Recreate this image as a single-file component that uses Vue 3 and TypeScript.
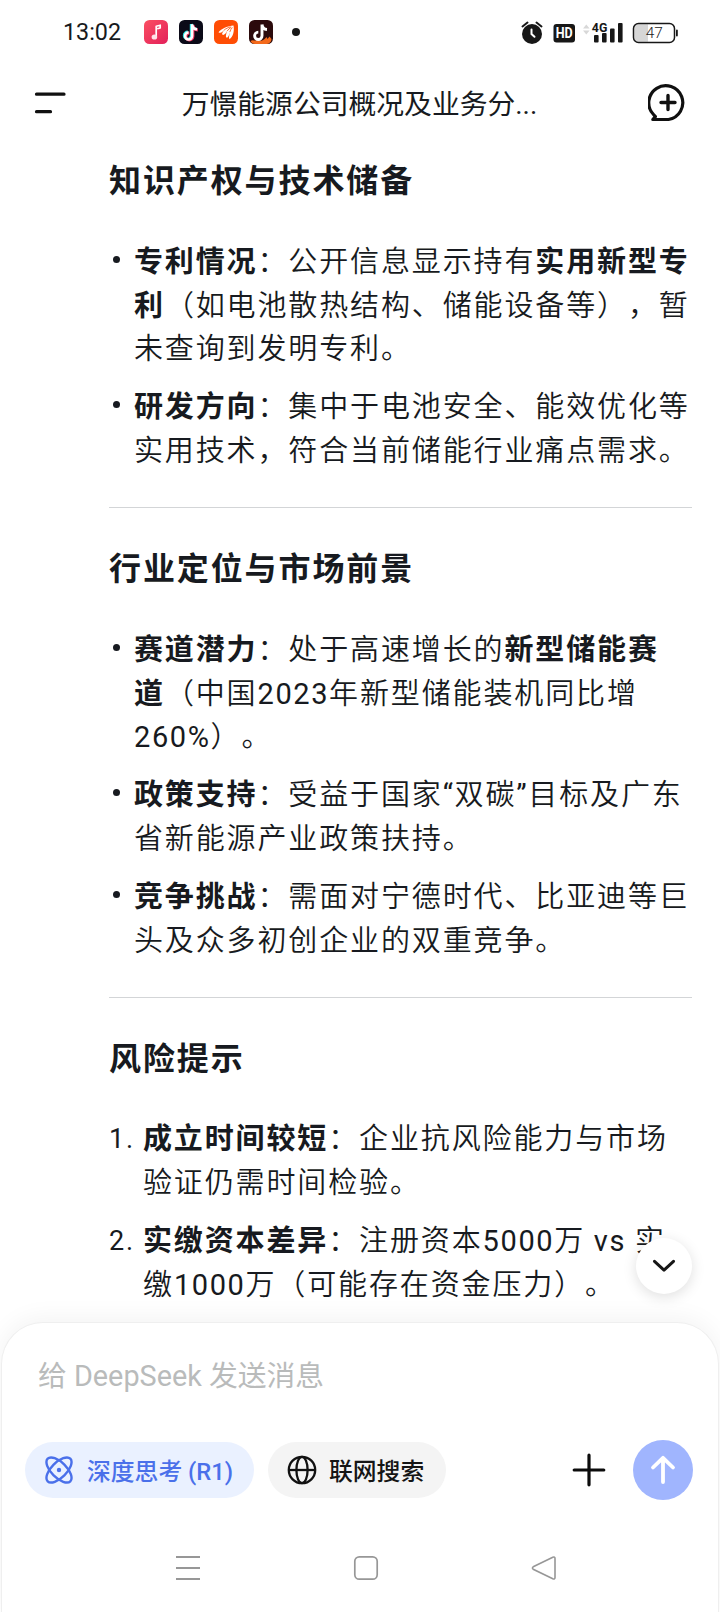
<script setup lang="ts">
interface Run {
  text: string
  bold?: boolean
  latin?: boolean
}
interface Item {
  marker: string
  lines: Run[][]
}
interface Section {
  title: string
  ordered?: boolean
  items: Item[]
}

const b = (text: string): Run => ({ text, bold: true })
const t = (text: string): Run => ({ text })
const n = (text: string): Run => ({ text, latin: true })

const sections: Section[] = [
  {
    title: '知识产权与技术储备',
    items: [
      {
        marker: '•',
        lines: [
          [b('专利情况'), t('：公开信息显示持有'), b('实用新型专')],
          [b('利'), t('（如电池散热结构、储能设备等），暂')],
          [t('未查询到发明专利。')],
        ],
      },
      {
        marker: '•',
        lines: [
          [b('研发方向'), t('：集中于电池安全、能效优化等')],
          [t('实用技术，符合当前储能行业痛点需求。')],
        ],
      },
    ],
  },
  {
    title: '行业定位与市场前景',
    items: [
      {
        marker: '•',
        lines: [
          [b('赛道潜力'), t('：处于高速增长的'), b('新型储能赛')],
          [b('道'), t('（中国'), n('2023'), t('年新型储能装机同比增')],
          [n('260%'), t('）。')],
        ],
      },
      {
        marker: '•',
        lines: [
          [b('政策支持'), t('：受益于国家'), n('“'), t('双碳'), n('”'), t('目标及广东')],
          [t('省新能源产业政策扶持。')],
        ],
      },
      {
        marker: '•',
        lines: [
          [b('竞争挑战'), t('：需面对宁德时代、比亚迪等巨')],
          [t('头及众多初创企业的双重竞争。')],
        ],
      },
    ],
  },
  {
    title: '风险提示',
    ordered: true,
    items: [
      {
        marker: '1.',
        lines: [
          [b('成立时间较短'), t('：企业抗风险能力与市场')],
          [t('验证仍需时间检验。')],
        ],
      },
      {
        marker: '2.',
        lines: [
          [b('实缴资本差异'), t('：注册资本'), n('5000'), t('万'), n(' vs '), t('实')],
          [t('缴'), n('1000'), t('万（可能存在资金压力）。')],
        ],
      },
    ],
  },
]
</script>

<template>
  <div class="screen">
    <div class="status">
      <span class="clock">13:02</span>
      <div class="apps">
        <svg class="app" viewBox="0 0 24 24">
          <defs>
            <linearGradient id="pink" x1="0" y1="0" x2="1" y2="1">
              <stop offset="0" stop-color="#fb4f62" />
              <stop offset="1" stop-color="#e3205a" />
            </linearGradient>
          </defs>
          <rect width="24" height="24" rx="5.5" fill="url(#pink)" />
          <path d="M12.2 16.8V6.200l4-1v2.800l-3 .8" fill="none" stroke="#fff" stroke-width="1.700" stroke-linejoin="round" />
          <ellipse cx="10.400" cy="17" rx="2.800" ry="2.600" fill="#ffe3e8" />
        </svg>
        <svg class="app" viewBox="0 0 24 24">
          <rect width="24" height="24" rx="5.500" fill="#0b0a18" />
          <g fill="none" stroke-width="3">
            <path d="M12.300 4v11.500a3.500 3.500 0 1 1-3.500-3.500M12.300 4c.3 3 2 4.800 5 5" stroke="#2be5e4" />
            <path d="M13.900 5v11.500a3.500 3.500 0 1 1-3.500-3.500M13.900 5c.3 3 2 4.800 5 5" stroke="#f5305b" />
            <path d="M13.100 4.300v11.700a3.500 3.500 0 1 1-3.500-3.500M13.100 4.300c.3 3 2 4.800 5 5" stroke="#fff" stroke-width="2.600" />
          </g>
        </svg>
        <svg class="app" viewBox="0 0 24 24">
          <rect width="24" height="24" rx="5.500" fill="#ff4d05" />
          <path d="M19.500 5.500C14 6.200 8 8 4.500 12.200c2 1.600 4-.2 5.200-1.700-1 2-2.300 3.400-1.200 4.300 1.700.6 3.500-1.600 4.500-3.600-.8 2.700-1.700 5-.6 6.400 1.800.4 2.900-2.700 3.400-5.600 0 2.800-1.600 5.500-.4 7.200 3.600-2.200 5.200-8 4.100-13.700z" fill="#fff" />
          <path d="M9.700 10.500c2-2 4.500-3 7-3.600M13 11.200c1.200-1.700 2.600-3 4.400-4M15.800 12c.5-1.800 1.400-3.300 2.600-4.500" fill="none" stroke="#ff4d05" stroke-width=".8" />
        </svg>
        <svg class="app" viewBox="0 0 24 24">
          <rect width="24" height="24" rx="5.500" fill="#2b0a0c" />
          <path d="M1.500 21c2-1.500 4 0 6-.5s4 .5 5.500 0 3-1.500 4.500-3.500l1 2 2-2.500 2 2.500A5.500 5.500 0 0 1 18 24H6A5 5 0 0 1 1.500 21z" fill="#f46a1c" />
          <path d="M13 4.500v11.300a3.700 3.700 0 1 1-3.700-3.700M13 4.500c.3 3 2 4.800 5 5" fill="none" stroke="#fff" stroke-width="2.900" />
        </svg>
      </div>
      <i class="more-dot"></i>
      <svg class="sys" width="170" height="30" viewBox="0 0 170 30">
        <circle cx="12" cy="18" r="10" fill="#171717" />
        <path d="M2.500 10.500 7.500 6.500M21.500 10.500 16.500 6.500" stroke="#171717" stroke-width="2" stroke-linecap="round" />
        <path d="M11.500 13.500v4.500l3 2.800" fill="none" stroke="#fff" stroke-width="2" stroke-linecap="round" />
        <rect x="33.500" y="8" width="21.500" height="18.500" rx="3" fill="#171717" />
        <text x="44.200" y="22.300" text-anchor="middle" font-size="14" font-weight="700" fill="#fff" textLength="17" lengthAdjust="spacingAndGlyphs">HD</text>
        <path d="M63 12.500 66.300 8.500 69.600 12.500zM63 14.500h6.600L66.300 18.500z" fill="#d8d8d8" />
        <g fill="#171717">
          <rect x="74" y="19" width="4.600" height="7.500" rx="1" />
          <rect x="82" y="17" width="4.600" height="9.500" rx="1" />
          <rect x="90" y="12.500" width="4.600" height="14" rx="1" />
          <rect x="98" y="7" width="4.600" height="19.500" rx="1" />
        </g>
        <text x="71.800" y="16" font-size="13.500" font-weight="700" fill="#171717" textLength="15.500" lengthAdjust="spacingAndGlyphs">4G</text>
        <path d="M118 8.200h10v17.600h-10a3.500 3.500 0 0 1-3.500-3.500V11.700a3.500 3.500 0 0 1 3.500-3.500z" fill="#d6d6d6" />
        <rect x="113.500" y="7.500" width="41" height="19" rx="5" fill="none" stroke="#171717" stroke-width="1.500" />
        <rect x="156" y="13.500" width="1.800" height="7" rx=".9" fill="#171717" />
        <text x="134.300" y="22.300" text-anchor="middle" font-size="15.500" font-weight="300" fill="#222">47</text>
      </svg>
    </div>

    <header class="bar">
      <svg class="menu" width="34" height="26" viewBox="0 0 34 26">
        <path d="M2.500 4.200H30M2.500 21.700H16.500" stroke="#101010" stroke-width="3.200" stroke-linecap="round" />
      </svg>
      <h1 class="title">万憬能源公司概况及业务分...</h1>
      <svg class="new-chat" width="40" height="40" viewBox="0 0 40 40">
        <path d="M5.500 31.500A17 17 0 1 1 20.500 36.500H4.800l2.600-2.900z" fill="none" stroke="#101010" stroke-width="3.200" stroke-linejoin="round" />
        <path d="M20 12.500v14M13 19.500h14" stroke="#101010" stroke-width="3.400" stroke-linecap="round" />
      </svg>
    </header>

    <main class="answer">
      <section v-for="s in sections" :key="s.title" class="section">
        <h2 class="heading">{{ s.title }}</h2>
        <ul class="list">
          <li v-for="(item, i) in s.items" :key="i" class="item">
            <i v-if="!s.ordered" class="bullet"></i>
            <span v-else class="number">{{ item.marker }}</span>
            <div class="text">
              <div v-for="(line, j) in item.lines" :key="j" class="line"><span v-for="(r, k) in line" :key="k" :class="{ strong: r.bold, latin: r.latin }">{{ r.text }}</span></div>
            </div>
          </li>
        </ul>
      </section>
      <button class="to-bottom" aria-label="down">
        <svg width="26" height="18" viewBox="0 0 26 18">
          <path d="M3.500 4.300 13 13.200 22.500 4.300" fill="none" stroke="#171717" stroke-width="3" stroke-linecap="round" stroke-linejoin="round" />
        </svg>
      </button>
    </main>

    <footer class="composer">
      <div class="placeholder">给 DeepSeek 发送消息</div>
      <div class="tools">
        <button class="chip active">
          <svg width="28" height="28" viewBox="0 0 28 28" fill="none" stroke="#4a70ea" stroke-width="2.400">
            <ellipse cx="14" cy="14" rx="16" ry="7.600" transform="rotate(45 14 14)" />
            <ellipse cx="14" cy="14" rx="16" ry="7.600" transform="rotate(-45 14 14)" />
            <circle cx="14" cy="14" r="2.200" fill="#4a70ea" stroke="none" />
          </svg>
          <span class="label">深度思考 (R1)</span>
        </button>
        <button class="chip search">
          <svg width="30" height="30" viewBox="0 0 30 30" fill="none" stroke="#111" stroke-width="2.300">
            <circle cx="15" cy="15" r="13.200" />
            <ellipse cx="15" cy="15" rx="5.600" ry="13.200" />
            <path d="M2 15h26" />
          </svg>
          <span class="label">联网搜索</span>
        </button>
        <svg class="plus" width="34" height="34" viewBox="0 0 34 34">
          <path d="M17 2.200v29.600M2.200 17h29.600" stroke="#0c0c0c" stroke-width="3.200" stroke-linecap="round" />
        </svg>
        <button class="send" aria-label="send">
          <svg width="30" height="32" viewBox="0 0 30 32">
            <path d="M15 28V4M5 13.500 15 3.800 25 13.500" fill="none" stroke="#fff" stroke-width="3.800" stroke-linecap="round" stroke-linejoin="round" />
          </svg>
        </button>
      </div>
      <nav class="nav">
        <svg width="26" height="26" viewBox="0 0 26 26">
          <path d="M1 2h24M1 13h24M1 24h24" stroke="#979797" stroke-width="1.800" />
        </svg>
        <svg width="26" height="26" viewBox="0 0 26 26">
          <rect x="1.800" y="1.800" width="22.400" height="22.400" rx="4.500" fill="none" stroke="#979797" stroke-width="1.700" />
        </svg>
        <svg width="26" height="26" viewBox="0 0 26 26">
          <path d="M2.200 11.800 21.800 2.200Q24 1.300 24 3.500V22.500Q24 24.700 21.800 23.800L2.200 14.200Q.7 13 2.200 11.800z" fill="none" stroke="#979797" stroke-width="1.600" />
        </svg>
      </nav>
    </footer>
  </div>
</template>

<style>
body {
  margin: 0;
  background: #fff;
}
</style>

<style scoped>
.screen {
  width: 720px;
  height: 1612px;
  display: flex;
  flex-direction: column;
  overflow: hidden;
  background: #fff;
  color: #171a20;
  font-family: Roboto, 'Noto Sans CJK SC', sans-serif;
  text-spacing-trim: space-all;
  white-space: nowrap;
}
button {
  border: 0;
  padding: 0;
  font: inherit;
}
.status {
  height: 64px;
  flex: none;
  display: flex;
  align-items: center;
  padding: 0 30px 0 63px;
  box-sizing: border-box;
}
.clock {
  width: 81px;
  font-size: 23.300px;
  line-height: 30px;
}
.apps {
  display: flex;
  gap: 11px;
}
.app {
  width: 24px;
  height: 24px;
}
.more-dot {
  width: 8px;
  height: 8px;
  margin-left: 19px;
  border-radius: 50%;
  background: #171717;
}
.sys {
  margin-left: auto;
  margin-bottom: 2px;
}
.bar {
  height: 78px;
  flex: none;
  display: flex;
  align-items: center;
  padding: 0 32px 0 34px;
}
.menu {
  flex: none;
}
.title {
  flex: 1;
  margin: 0;
  padding-top: 3px;
  padding-left: 3px;
  text-align: center;
  font-size: 27.800px;
  font-weight: 400;
  line-height: 40px;
}
.new-chat {
  flex: none;
}
.answer {
  position: relative;
  flex: 1;
  min-height: 0;
  padding: 8px 28px 0 109px;
}
.section {
  padding-bottom: 32.800px;
}
.section + .section {
  border-top: 1px solid #d3d5d7;
  padding-top: 30px;
}
.heading {
  height: 62px;
  margin: 0 0 28.800px;
  line-height: 62px;
  font-size: 32px;
  font-weight: 700;
  letter-spacing: 1.900px;
}
.list {
  margin: 0;
  padding: 0;
  list-style: none;
  display: flex;
  flex-direction: column;
  gap: 14.100px;
}
.item {
  display: flex;
}
.bullet {
  flex: none;
  width: 7px;
  height: 7px;
  margin: 15px 14px 0 4px;
  border-radius: 50%;
  background: #171a20;
}
.number {
  flex: none;
  width: 34px;
  font-size: 27px;
  line-height: 43.900px;
  letter-spacing: 1.800px;
}
.line {
  height: 43.850px;
  line-height: 43.850px;
  font-size: 29px;
  font-weight: 350;
  letter-spacing: 1.870px;
}
.latin {
  font-weight: 400;
  letter-spacing: 1.600px;
  white-space: pre;
}
.strong {
  font-weight: 700;
}
.to-bottom {
  position: absolute;
  right: 28px;
  bottom: 28px;
  width: 56px;
  height: 56px;
  display: flex;
  align-items: center;
  justify-content: center;
  border-radius: 50%;
  background: #fff;
  box-shadow: 0 3px 14px rgba(0, 0, 0, 0.13);
}
.composer {
  position: relative;
  flex: none;
  height: 290px;
  margin: 0 1px;
  box-sizing: border-box;
  border: 1.500px solid #efefef;
  border-bottom: 0;
  border-radius: 42px 42px 0 0;
  background: #fff;
  box-shadow: 0 -4px 24px rgba(0, 0, 0, 0.05);
}
.placeholder {
  padding: 31px 0 0 36px;
  line-height: 44px;
  font-size: 28.800px;
  color: #b9bbbb;
}
.tools {
  display: flex;
  align-items: center;
  height: 60px;
  margin-top: 42px;
  padding: 0 25px 0 23px;
}
.chip {
  display: flex;
  align-items: center;
  height: 56px;
  box-sizing: border-box;
  border-radius: 28px;
  font-size: 23.800px;
  font-weight: 500;
}
.chip svg {
  flex: none;
}
.label {
  padding-bottom: 2px;
}
.active {
  width: 229px;
  padding-left: 20px;
  gap: 14px;
  background: #eaf1ff;
  color: #4a70ea;
}
.search {
  width: 178px;
  margin-left: 14px;
  padding-left: 19px;
  gap: 12px;
  background: #f4f4f4;
  color: #151515;
}
.plus {
  margin-left: auto;
  margin-right: 27px;
}
.send {
  width: 60px;
  height: 60px;
  display: flex;
  align-items: center;
  justify-content: center;
  border-radius: 50%;
  background: #a0b5fe;
}
.nav {
  display: flex;
  justify-content: center;
  gap: 152px;
  margin-top: 55px;
  padding-left: 12px;
}
</style>
